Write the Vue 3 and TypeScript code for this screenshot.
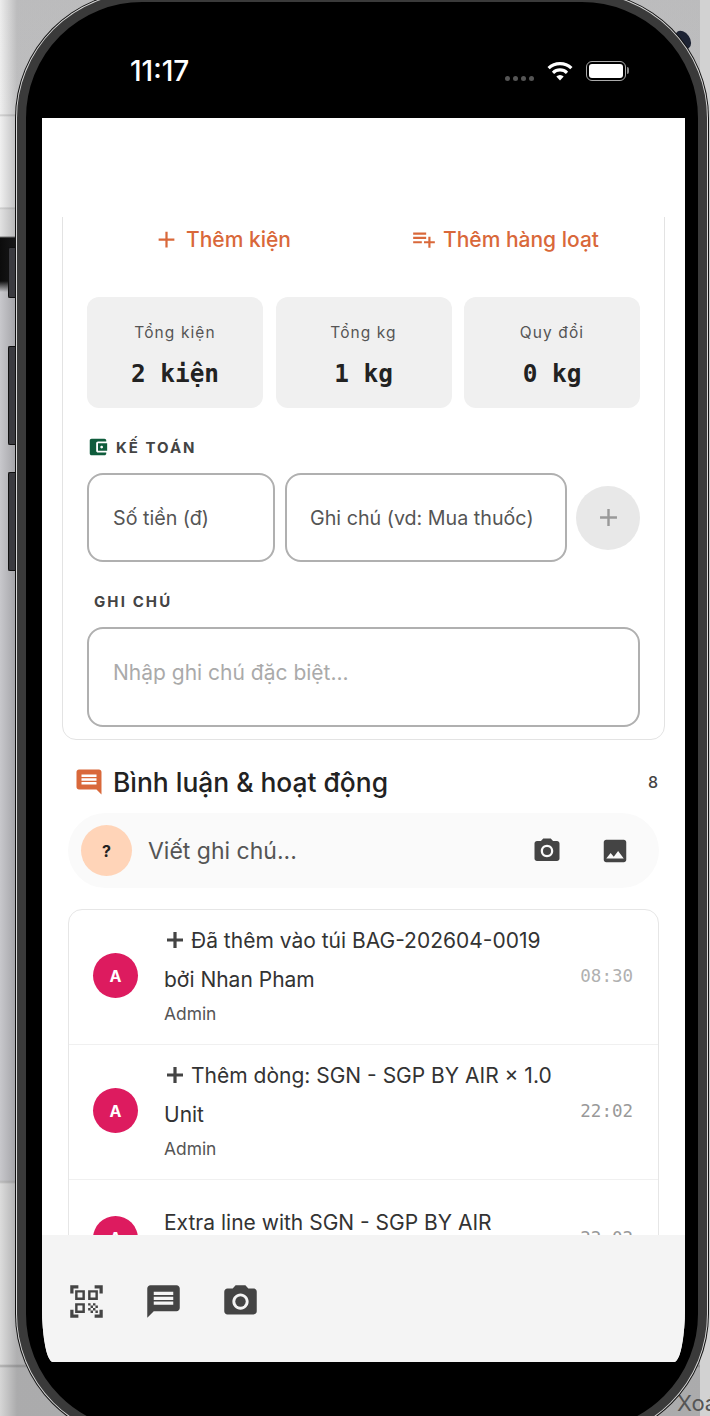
<script setup lang="ts">
const stats = [
  { label: 'Tổng kiện', value: '2 kiện' },
  { label: 'Tổng kg', value: '1 kg' },
  { label: 'Quy đổi', value: '0 kg' },
]

const activity = [
  { lines: ['Đã thêm vào túi BAG-202604-0019', 'bởi Nhan Pham'], time: '08:30', added: true, light: true },
  { lines: ['Thêm dòng: SGN - SGP BY AIR × 1.0', 'Unit'], time: '22:02', added: true, light: false },
  { lines: ['Extra line with SGN - SGP BY AIR'], time: '22:02', added: false, light: false },
]

const cameraPath = 'M9 2L7.17 4H4c-1.1 0-2 .9-2 2v12c0 1.1.9 2 2 2h16c1.1 0 2-.9 2-2V6c0-1.1-.9-2-2-2h-3.17L15 2H9zm3 15c-2.76 0-5-2.24-5-5s2.24-5 5-5 5 2.24 5 5-2.24 5-5 5z'
</script>

<template>
  <div class="page">
    <span class="bg-xoa">Xoá</span>
    <span class="side-btn btn-mute" />
    <span class="side-btn btn-up" />
    <span class="side-btn btn-down" />
    <span class="cam-bump" />

    <div class="phone">
      <div class="status">
        <span class="clock">11:17</span>
        <div class="status-right">
          <div class="signal"><i v-for="n in 4" :key="n" /></div>
          <svg class="wifi" viewBox="0 0 26 20" fill="none" stroke="#fff" stroke-width="3.2">
            <path d="M1.6 7.2a16.4 16.4 0 0 1 22.8 0" />
            <path d="M6 11.8a10 10 0 0 1 14 0" />
            <path d="M13 19.6l-3.7-4.1a5.2 5.2 0 0 1 7.4 0z" fill="#fff" stroke="none" />
          </svg>
          <div class="battery"><i /></div>
        </div>
      </div>

      <div class="screen">
        <div class="screen-head" />

        <div class="scroll">
          <section class="card">
            <div class="add-row">
              <div class="add-btn">
                <svg class="add-plus" viewBox="0 0 24 24"><path d="M19 13h-6v6h-2v-6H5v-2h6V5h2v6h6v2z" /></svg>
                <span>Thêm kiện</span>
              </div>
              <div class="add-btn">
                <svg class="add-list" viewBox="0 0 24 24"><path d="M14 10H2v2h12v-2zm0-4H2v2h12V6zm4 8v-4h-2v4h-4v2h4v4h2v-4h4v-2h-4zM2 16h8v-2H2v2z" /></svg>
                <span>Thêm hàng loạt</span>
              </div>
            </div>

            <div class="stats">
              <div v-for="s in stats" :key="s.label" class="stat">
                <div class="stat-label">{{ s.label }}</div>
                <div class="stat-value">{{ s.value }}</div>
              </div>
            </div>

            <div class="section-label">
              <svg class="wallet" viewBox="0 0 24 24"><path d="M21 18v1c0 1.1-.9 2-2 2H5c-1.11 0-2-.9-2-2V5c0-1.1.89-2 2-2h14c1.1 0 2 .9 2 2v1h-9c-1.11 0-2 .9-2 2v8c0 1.1.89 2 2 2h9zm-9-2h10V8H12v8zm4-2.5c-.83 0-1.5-.67-1.5-1.5s.67-1.5 1.5-1.5 1.5.67 1.5 1.5-.67 1.5-1.5 1.5z" /></svg>
              <span>KẾ TOÁN</span>
            </div>

            <div class="money-row">
              <div class="field field-amount">Số tiền (đ)</div>
              <div class="field field-note">Ghi chú (vd: Mua thuốc)</div>
              <div class="round-add">
                <svg viewBox="0 0 24 24"><path d="M19 13h-6v6h-2v-6H5v-2h6V5h2v6h6v2z" /></svg>
              </div>
            </div>

            <div class="section-label note-label">GHI CHÚ</div>
            <div class="textarea">Nhập ghi chú đặc biệt...</div>
          </section>

          <div class="comments-head">
            <svg class="comment-icon" viewBox="0 0 24 24"><path d="M21.99 4c0-1.1-.89-2-1.99-2H4c-1.1 0-2 .9-2 2v12c0 1.1.9 2 2 2h14l4 4-.01-18zM18 14H6v-2h12v2zm0-3H6V9h12v2zm0-3H6V6h12v2z" /></svg>
            <h2>Bình luận &amp; hoạt động</h2>
            <span class="count">8</span>
          </div>

          <div class="composer">
            <div class="me">?</div>
            <span class="composer-text">Viết ghi chú...</span>
            <svg class="composer-icon" viewBox="0 0 24 24"><circle cx="12" cy="12" r="3.2" /><path :d="cameraPath" /></svg>
            <svg class="composer-icon" viewBox="0 0 24 24"><path d="M21 19V5c0-1.1-.9-2-2-2H5c-1.1 0-2 .9-2 2v14c0 1.1.9 2 2 2h14c1.1 0 2-.9 2-2zM8.5 13.5l2.5 3.01L14.5 12l4.5 6H5l3.5-4.5z" /></svg>
          </div>

          <div class="feed">
            <div v-for="(item, i) in activity" :key="i" class="feed-row" :class="{ 'feed-row-single': !item.added }">
              <div class="avatar">A</div>
              <div class="feed-body">
                <div v-for="(line, j) in item.lines" :key="j" class="feed-line">
                  <svg v-if="item.added && j === 0" class="feed-plus" viewBox="0 0 18 18"><path d="M7.4 1h3.2v6.4H17v3.2h-6.4V17H7.4v-6.4H1V7.4h6.4z" /></svg>{{ line }}
                </div>
                <div class="feed-sub">Admin</div>
              </div>
              <span class="feed-time" :class="{ 'feed-time-light': item.light }">{{ item.time }}</span>
            </div>
          </div>
        </div>

        <div class="bottom-bar">
          <svg class="bar-icon" viewBox="0 0 24 24"><path d="M9.5 6.5v3h-3v-3h3M11 5H5v6h6V5zm-1.5 9.5v3h-3v-3h3M11 13H5v6h6v-6zm6.5-6.5v3h-3v-3h3M19 5h-6v6h6V5zm-6 8h1.5v1.5H13V13zm1.5 1.5H16V16h-1.5v-1.5zM16 13h1.5v1.5H16V13zm-3 3h1.5v1.5H13V16zm1.5 1.5H16V19h-1.5v-1.5zM16 16h1.5v1.5H16V16zm1.5-1.5H19V16h-1.5v-1.5zm0 3H19V19h-1.5v-1.5zM22 7h-2V4h-3V2h5v5zm0 15v-5h-2v3h-3v2h5zM2 22h5v-2H4v-3H2v5zM2 2v5h2V4h3V2H2z" /></svg>
          <svg class="bar-icon" viewBox="0 0 24 24"><path d="M20 2H4c-1.1 0-1.99.9-1.99 2L2 22l4-4h14c1.1 0 2-.9 2-2V4c0-1.1-.9-2-2-2zm-2 12H6v-2h12v2zm0-3H6V9h12v2zm0-3H6V6h12v2z" /></svg>
          <svg class="bar-icon" viewBox="0 0 24 24"><circle cx="12" cy="12" r="3.2" /><path :d="cameraPath" /></svg>
        </div>
      </div>
    </div>
  </div>
</template>

<style>
html,
body {
  margin: 0;
  background: #c4c4c6;
}
</style>

<style scoped>
.page {
  position: relative;
  width: 710px;
  height: 1416px;
  overflow: hidden;
  font-family: Inter, 'Noto Sans', sans-serif;
  background:
    linear-gradient(90deg, transparent 700px, #d2d2d2 700px),
    linear-gradient(90deg, rgba(60, 60, 64, 0) 0, rgba(60, 60, 64, 0.28) 17px, rgba(60, 60, 64, 0.28) 700px, rgba(60, 60, 64, 0) 710px),
    linear-gradient(180deg, #ededed 0, #efefef 114px, #c9c9c9 115px, #f0f0f0 117px, #f0f0f0 207px, #c9c9c9 208px, #e2e2e2 210px, #e2e2e2 236px, #0c0c0c 238px, #0c0c0c 281px, #c8c8cc 292px, #c8c8cc 1180px, #b8b8b8 1182px, #dcdcdc 1184px, #dcdcdc 1364px, #aaaaaa 1366px, #d6d6d6 1368px);
}

.bg-xoa {
  position: absolute;
  left: 677px;
  top: 1390px;
  font-size: 22px;
  color: #555;
}

.side-btn {
  position: absolute;
  left: 8px;
  width: 9px;
  background: #3b3b40;
  border: 1px solid #111;
  border-right: 0;
  border-radius: 2px 0 0 2px;
  box-sizing: border-box;
}

.btn-mute {
  top: 247px;
  height: 51px;
}

.btn-up {
  top: 346px;
  height: 99px;
}

.btn-down {
  top: 472px;
  height: 99px;
}

.cam-bump {
  position: absolute;
  left: 676px;
  top: 30px;
  width: 14px;
  height: 20px;
  border-radius: 50%;
  background: #1d2333;
  transform: rotate(-35deg);
}

.phone {
  position: relative;
  box-sizing: border-box;
  width: 690px;
  height: 1446px;
  margin-left: 17px;
  margin-top: -7px;
  border: 9px solid #3a3a3a;
  border-radius: 125px;
  background: #000;
  padding: 0 12px 0 16px;
  box-shadow: 0 0 0 1px #d8d8d8, 0 0 0 2px #111;
}

.status {
  display: flex;
  align-items: flex-start;
  justify-content: space-between;
  height: 116px;
  box-sizing: border-box;
  padding: 53px 60px 0 88px;
  color: #fff;
}

.clock {
  font-size: 28px;
  line-height: 32px;
  font-weight: 500;
}

.status-right {
  display: flex;
  align-items: center;
  gap: 13px;
  height: 20px;
  margin-top: 6px;
}

.signal {
  display: flex;
  gap: 3px;
  margin-top: 14px;
}

.signal i {
  width: 5px;
  height: 5px;
  border-radius: 50%;
  background: #555;
}

.wifi {
  width: 26px;
  height: 20px;
}

.battery {
  position: relative;
  box-sizing: border-box;
  width: 40px;
  height: 20px;
  padding: 2px;
  border: 1.5px solid #aaa;
  border-radius: 6px;
}

.battery::after {
  content: '';
  position: absolute;
  right: -4px;
  top: 5px;
  width: 2px;
  height: 7px;
  border-radius: 0 2px 2px 0;
  background: #888;
}

.battery i {
  display: block;
  height: 100%;
  border-radius: 3px;
  background: #fff;
}

.screen {
  display: flex;
  flex-direction: column;
  width: 643px;
  height: 1244px;
  overflow: hidden;
  background: #fff;
  border-radius: 0 0 11px 11px / 0 0 55px 55px;
}

.screen-head {
  flex: none;
  height: 99px;
  background: #fff;
}

.scroll {
  flex: 1;
  min-height: 0;
  overflow: hidden;
}

.card {
  margin: -20px 20px 0;
  padding: 20px 24px 12px;
  border: 1px solid #e3e3e3;
  border-radius: 14px;
}

.add-row {
  display: grid;
  grid-template-columns: 270px 270px;
  gap: 13px;
  height: 42px;
}

.add-btn {
  display: flex;
  align-items: center;
  justify-content: center;
  gap: 6px;
  font-size: 21px;
  font-weight: 500;
  color: #d9683a;
}

.add-btn svg {
  fill: #d9683a;
}

.add-plus {
  width: 27px;
  height: 27px;
}

.add-list {
  width: 26px;
  height: 26px;
}

.stats {
  display: grid;
  grid-template-columns: repeat(3, 1fr);
  gap: 12.5px;
  margin-top: 37px;
}

.stat {
  height: 111px;
  box-sizing: border-box;
  padding-top: 26px;
  border-radius: 12px;
  background: #f0f0f0;
  text-align: center;
}

.stat-label {
  font-size: 15.5px;
  line-height: 20px;
  letter-spacing: 1.1px;
  color: #555;
}

.stat-value {
  margin-top: 15px;
  font-family: 'DejaVu Sans Mono', 'Liberation Mono', monospace;
  font-size: 24.4px;
  line-height: 32px;
  font-weight: 700;
  color: #222;
}

.section-label {
  display: flex;
  align-items: center;
  gap: 7px;
  height: 22px;
  margin-top: 28px;
  font-size: 15px;
  font-weight: 700;
  letter-spacing: 2px;
  color: #444;
}

.wallet {
  width: 22px;
  height: 22px;
  fill: #0f5c3c;
}

.money-row {
  display: flex;
  align-items: center;
  gap: 10px;
  margin-top: 15px;
}

.field {
  box-sizing: border-box;
  height: 89px;
  display: flex;
  align-items: center;
  padding-left: 24px;
  border: 2px solid #b0b0b0;
  border-radius: 16px;
  font-size: 19.7px;
  color: #555;
}

.field-amount {
  width: 188px;
}

.field-note {
  width: 282px;
  padding-left: 23px;
}

.round-add {
  display: flex;
  align-items: center;
  justify-content: center;
  width: 64px;
  height: 64px;
  margin-left: -1px;
  border-radius: 50%;
  background: #e8e8e8;
}

.round-add svg {
  width: 29px;
  height: 29px;
  fill: #999;
}

.note-label {
  margin-top: 28px;
  padding-left: 7px;
  letter-spacing: 2.1px;
}

.textarea {
  box-sizing: border-box;
  height: 100px;
  margin-top: 15px;
  padding: 30px 24px 0;
  border: 2px solid #b0b0b0;
  border-radius: 16px;
  font-size: 21px;
  line-height: 28px;
  color: #aaa;
}

.comments-head {
  display: flex;
  align-items: center;
  height: 30px;
  margin: 27px 27px 0 32px;
}

.comment-icon {
  width: 30px;
  height: 30px;
  fill: #d9683a;
}

.comments-head h2 {
  flex: 1;
  margin: 0 0 0 9px;
  font-size: 26.4px;
  line-height: 30px;
  font-weight: 500;
  color: #222;
}

.count {
  font-size: 16px;
  font-weight: 500;
  color: #444;
}

.composer {
  display: flex;
  align-items: center;
  height: 75px;
  margin: 16px 26px 0;
  padding: 0 29px 0 13px;
  border-radius: 38px;
  background: #fafafa;
}

.me {
  display: flex;
  align-items: center;
  justify-content: center;
  width: 51px;
  height: 51px;
  border-radius: 50%;
  background: #ffd4b8;
  font-size: 16px;
  font-weight: 700;
  color: #222;
}

.composer-text {
  flex: 1;
  margin-left: 16px;
  font-size: 23px;
  color: #555;
}

.composer-icon {
  width: 30px;
  height: 30px;
  fill: #444;
  margin-left: 38px;
}

.feed {
  margin: 21px 26px 0;
  border: 1px solid #e6e6e6;
  border-radius: 14px;
}

.feed-row {
  display: flex;
  align-items: center;
  padding: 12px 25px 15px 24px;
  border-bottom: 1px solid #f0f0f0;
}

.feed-row-single {
  padding-top: 24px;
}

.avatar {
  flex: none;
  display: flex;
  align-items: center;
  justify-content: center;
  width: 45px;
  height: 45px;
  border-radius: 50%;
  background: #dd1b5f;
  font-size: 16px;
  font-weight: 700;
  color: #fff;
}

.feed-body {
  flex: 1;
  min-width: 0;
  margin-left: 26px;
}

.feed-line {
  font-size: 21px;
  line-height: 38.5px;
  color: #333;
  white-space: nowrap;
}

.feed-plus {
  width: 18px;
  height: 18px;
  margin: 0 7px -1px 2px;
  fill: #444;
}

.feed-sub {
  font-size: 17.4px;
  line-height: 30px;
  color: #555;
}

.feed-time {
  font-family: 'DejaVu Sans Mono', 'Liberation Mono', monospace;
  font-size: 17.5px;
  color: #999;
}

.feed-time-light {
  color: #b0b0b0;
}

.bottom-bar {
  flex: none;
  display: flex;
  align-items: center;
  gap: 38px;
  height: 127px;
  box-sizing: border-box;
  padding: 6px 0 0 25px;
  background: #f4f4f4;
}

.bar-icon {
  width: 39px;
  height: 39px;
  fill: #444;
}
</style>
